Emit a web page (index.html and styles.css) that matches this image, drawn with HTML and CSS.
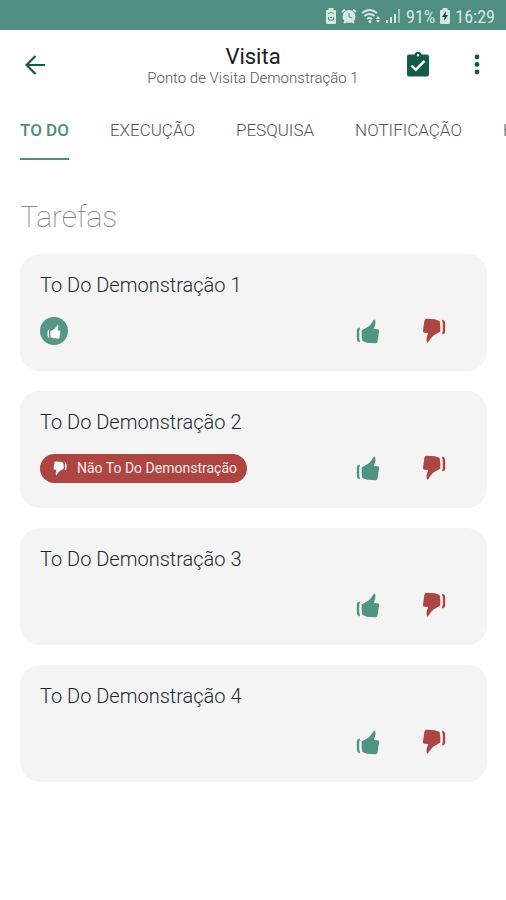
FILE: index.html
```html
<!DOCTYPE html>
<html lang="pt-BR">
<head>
<meta charset="utf-8">
<meta name="viewport" content="width=device-width, initial-scale=1">
<title>Visita</title>
<link rel="stylesheet" href="styles.css">
</head>
<body>
<svg class="defs" aria-hidden="true">
  <symbol id="thumb" viewBox="0 0 24 26">
    <path d="M4 9.8Q1 9.4.8 13v7.500Q1 24 4 24.300L3.200 20v-6.500zM5.700 12.500 12.500 8.500C15 6.500 16.500 3.500 18.300 1.200Q19.500 1.500 19.500 4.500C19.500 7 18.300 9 17.800 11L22 11.300Q23.300 11.600 23 13.500L21.600 23.200Q21.200 25.400 19.300 25.200L11 24.700 6.400 23Q5.200 18 5.700 12.500z"/>
  </symbol>
</svg>

<div class="status">
  <svg width="12" height="16" viewBox="0 0 12 16"><path fill="currentColor" d="M3.500 0h5v2H10q1 0 1 1v12q0 1-1 1H2q-1 0-1-1V3q0-1 1-1h1.500z"/><path class="cut" d="m3 6 3-2 3 2M3.500 9v3h5V9M5 9l1 1 1-1"/></svg>
  <svg width="16" height="16" viewBox="0 0 16 16"><circle cx="8" cy="8.500" r="6.500" fill="currentColor"/><path class="line" d="M1 4 4 1.500M15 4l-3-2.500M3 15l2-2m8 2-2-2"/><path class="cut" d="M8 5v4l3 1"/></svg>
  <svg width="21" height="16" viewBox="0 0 21 16"><path class="line" d="M1 5q7.500-6 15 0M3.500 8q5-4 10 0M6 11q2.500-2 5 0"/><circle cx="9" cy="13.500" r="1.500" fill="currentColor"/><path fill="currentColor" d="m17 8 2 3h-4zM17 15l-2-3h4z"/></svg>
  <svg width="16" height="16" viewBox="0 0 16 16"><path fill="currentColor" d="M0 12h2v3H0zM4 9h2v6H4zM8 6h2v9H8z"/><path fill="currentColor" opacity=".6" d="M12 1h2v14h-2z"/></svg>
  <span>91%</span>
  <svg width="12" height="16" viewBox="0 0 12 16"><path fill="currentColor" d="M3.500 0h5v2H10q1 0 1 1v12q0 1-1 1H2q-1 0-1-1V3q0-1 1-1h1.500z"/><path fill="#164c3d" d="M7 3 3 9h2.500L5 13l4-6H6.500z"/></svg>
  <span>16:29</span>
</div>

<header class="bar">
  <button class="icon" aria-label="Voltar"><svg width="22" height="22" viewBox="0 0 22 22"><path fill="none" stroke="currentColor" stroke-width="2.200" d="M21 11H3M11.500 2 2.500 11l9 9"/></svg></button>
  <div class="heading">
    <h1>Visita</h1>
    <p>Ponto de Visita Demonstração 1</p>
  </div>
  <button class="icon" aria-label="Tarefas"><svg width="24" height="26" viewBox="0 0 24 26"><path fill="currentColor" fill-rule="evenodd" d="M3 2.500h5.500a3.600 3.600 0 0 1 7 0H21q2 0 2 2v18q0 2-2 2H3q-2 0-2-2v-18q0-2 2-2zm9-.5a1.200 1.200 0 1 0 0 2.400 1.200 1.200 0 0 0 0-2.400z"/><path fill="none" stroke="#fff" stroke-width="2.400" d="m5.500 13.500 4.300 4.300 8.700-9"/></svg></button>
  <button class="icon" aria-label="Mais opções"><svg width="6" height="22" viewBox="0 0 6 22"><g fill="currentColor"><circle cx="3" cy="3" r="2.400"/><circle cx="3" cy="10.500" r="2.400"/><circle cx="3" cy="18" r="2.400"/></g></svg></button>
</header>

<nav class="tabs">
  <a class="active" href="#todo">TO DO</a>
  <a href="#execucao">EXECUÇÃO</a>
  <a href="#pesquisa">PESQUISA</a>
  <a href="#notificacao">NOTIFICAÇÃO</a>
  <a href="#historico">HISTÓRICO</a>
</nav>

<main id="todo">
  <h2>Tarefas</h2>
  <article class="card">
    <h3>To Do Demonstração 1</h3>
    <div class="row">
      <span class="done"><svg class="mini" role="img" aria-label="Feito"><use href="#thumb"/></svg></span>
      <div class="votes">
        <button class="up" aria-label="Sim"><svg class="thumb"><use href="#thumb"/></svg></button>
        <button class="down" aria-label="Não"><svg class="thumb"><use href="#thumb"/></svg></button>
      </div>
    </div>
  </article>
  <article class="card">
    <h3>To Do Demonstração 2</h3>
    <div class="row">
      <span class="refused"><svg class="mini"><use href="#thumb"/></svg>Não To Do Demonstração</span>
      <div class="votes">
        <button class="up" aria-label="Sim"><svg class="thumb"><use href="#thumb"/></svg></button>
        <button class="down" aria-label="Não"><svg class="thumb"><use href="#thumb"/></svg></button>
      </div>
    </div>
  </article>
  <article class="card">
    <h3>To Do Demonstração 3</h3>
    <div class="row">
      <div class="votes">
        <button class="up" aria-label="Sim"><svg class="thumb"><use href="#thumb"/></svg></button>
        <button class="down" aria-label="Não"><svg class="thumb"><use href="#thumb"/></svg></button>
      </div>
    </div>
  </article>
  <article class="card">
    <h3>To Do Demonstração 4</h3>
    <div class="row">
      <div class="votes">
        <button class="up" aria-label="Sim"><svg class="thumb"><use href="#thumb"/></svg></button>
        <button class="down" aria-label="Não"><svg class="thumb"><use href="#thumb"/></svg></button>
      </div>
    </div>
  </article>
</main>
</body>
</html>
```
FILE: styles.css
```css
* { box-sizing: border-box; }

body {
  margin: 0;
  background: #fefefe;
  color: #1d2a30;
  font-family: Roboto, "Liberation Sans", sans-serif;
}

h1, h2, h3, p { margin: 0; font-weight: 400; }

button {
  display: flex;
  align-items: center;
  justify-content: center;
  padding: 0;
  border: 0;
  background: none;
  color: inherit;
  cursor: pointer;
}

svg { flex: none; }

.defs { display: none; }

.status {
  display: flex;
  align-items: center;
  justify-content: flex-end;
  gap: 4px;
  height: 30px;
  padding: 2px 11px 0 0;
  background: #4f8e80;
  color: #d5e8e3;
  font-family: "Roboto Condensed", Roboto, sans-serif;
  font-size: 18px;
}

.line { fill: none; stroke: currentColor; stroke-width: 2; }
.cut { fill: none; stroke: #4f8e80; stroke-width: 1; }

.bar {
  display: grid;
  grid-template-columns: 70px 1fr 60px 58px;
  align-items: center;
  height: 70px;
  color: #145c47;
}

.icon { height: 48px; }

.heading {
  padding-left: 48px;
  text-align: center;
}

.heading h1 {
  color: #1c1c1c;
  font-size: 22px;
  line-height: 26px;
}

.heading p {
  color: #555;
  font-size: 15px;
  font-weight: 300;
  line-height: 16px;
  white-space: nowrap;
}

.tabs {
  display: flex;
  gap: 41px;
  padding-left: 20px;
  overflow: hidden;
}

.tabs a {
  flex: none;
  height: 60px;
  border-bottom: 2px solid transparent;
  color: #555;
  font-size: 17px;
  font-weight: 300;
  line-height: 60px;
  text-decoration: none;
}

.tabs .active {
  border-color: #4f8e80;
  color: #4f8e80;
  font-weight: 500;
}

main {
  display: grid;
  gap: 20px;
  padding: 39px 19px 20px 20px;
}

h2 {
  color: #777;
  font-size: 30px;
  font-weight: 100;
  line-height: 35px;
}

.card {
  height: 117px;
  padding: 18px 33px 0 20px;
  border-radius: 20px;
  background: #f4f4f4;
}

.card h3 {
  font-size: 20px;
  font-weight: 300;
  line-height: 26px;
}

.row {
  display: flex;
  align-items: center;
  height: 66px;
}

.votes {
  display: flex;
  gap: 26px;
  margin-left: auto;
}

.votes button { width: 40px; height: 40px; }

.up { color: #4f9483; }
.down { color: #ad4643; }

.thumb { width: 24px; height: 26px; fill: currentColor; }
.mini { width: 14px; height: 15px; fill: #fff; }
.down .thumb, .refused .mini { transform: rotate(180deg); }

.done {
  display: flex;
  align-items: center;
  justify-content: center;
  width: 28px;
  height: 28px;
  border-radius: 50%;
  background: #559685;
}

.refused {
  display: flex;
  align-items: center;
  gap: 10px;
  height: 29px;
  padding: 0 10px 0 13px;
  border-radius: 15px;
  background: #ad4643;
  color: #fbe9e8;
  font-size: 14px;
}
```
